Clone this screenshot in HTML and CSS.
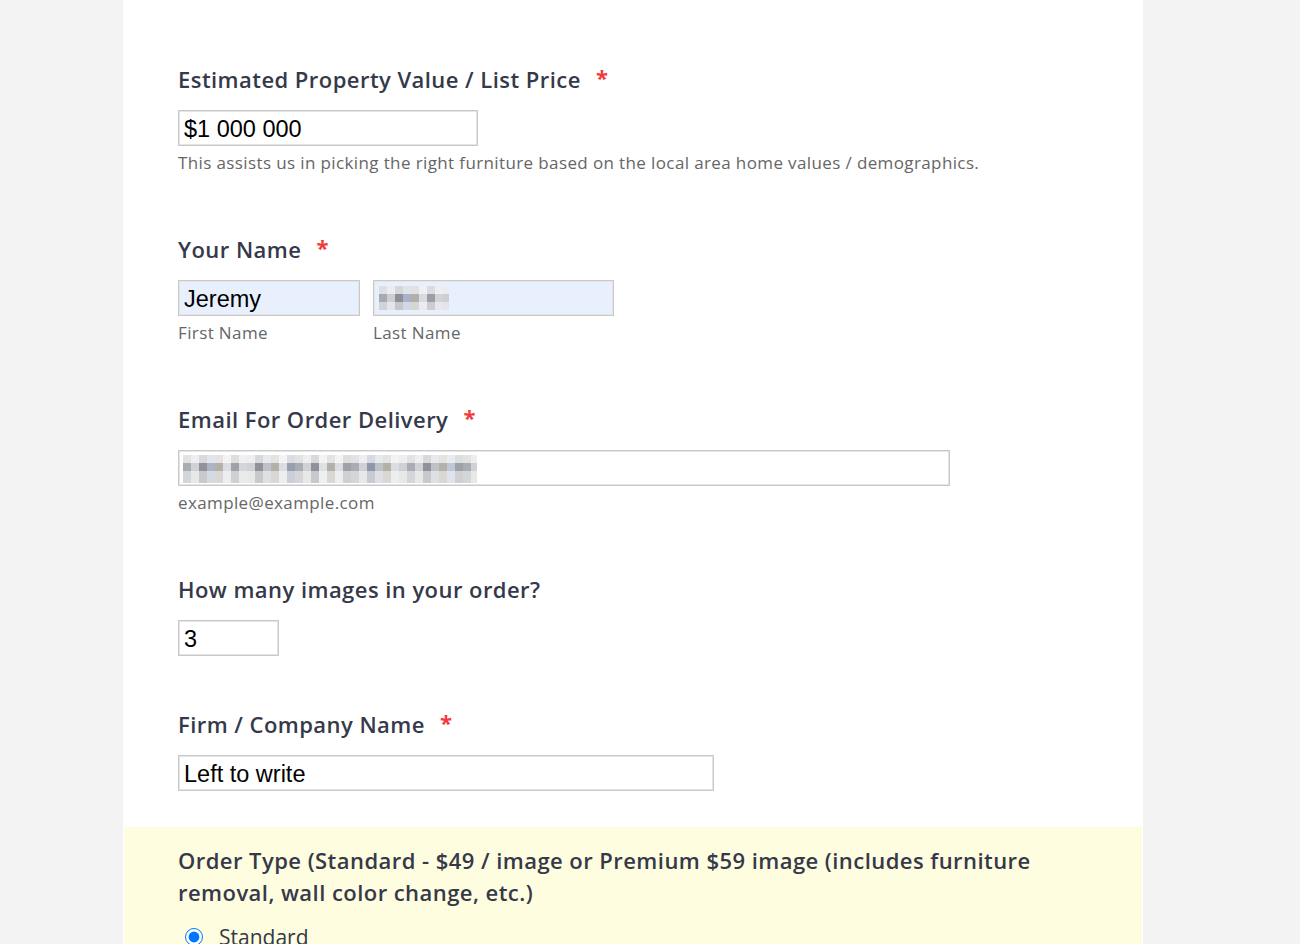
FILE: index.html
```html
<!DOCTYPE html>
<html lang="en">
<head>
  <meta charset="UTF-8" />
  <meta name="viewport" content="width=device-width, initial-scale=1.0" />
  <title>Virtual Staging Order Form</title>
  <link rel="stylesheet" href="styles.css">
</head>
<body>
  <!-- Order form card -->
  <form class="form-card">
    <div class="field">
      <label class="field-label" for="price">Estimated Property Value / List Price <span class="required">*</span></label>
      <input class="text-input price-input" id="price" type="text" value="$1 000 000" />
      <div class="sublabel">This assists us in picking the right furniture based on the local area home values / demographics.</div>
    </div>

    <div class="field">
      <label class="field-label">Your Name <span class="required">*</span></label>
      <div class="name-row">
        <div class="name-part">
          <input class="text-input autofill first-input" type="text" value="Jeremy" />
          <div class="sublabel">First Name</div>
        </div>
        <div class="name-part">
          <div class="text-input autofill last-input">
            <span class="mosaic mosaic-short"></span>
          </div>
          <div class="sublabel">Last Name</div>
        </div>
      </div>
    </div>

    <div class="field">
      <label class="field-label">Email For Order Delivery <span class="required">*</span></label>
      <div class="text-input email-input">
        <span class="mosaic mosaic-long"></span>
      </div>
      <div class="sublabel">example@example.com</div>
    </div>

    <div class="field field-count">
      <label class="field-label" for="count">How many images in your order?</label>
      <input class="text-input count-input" id="count" type="text" value="3" />
    </div>

    <div class="field field-tight">
      <label class="field-label" for="firm">Firm / Company Name <span class="required">*</span></label>
      <input class="text-input firm-input" id="firm" type="text" value="Left to write" />
    </div>

    <!-- Highlighted order type section -->
    <div class="field highlight">
      <div class="field-label wrap-label">Order Type (Standard - $49 / image or Premium $59 image (includes furniture removal, wall color change, etc.)</div>
      <label class="radio-row">
        <input type="radio" name="order-type" checked />
        <span>Standard</span>
      </label>
      <label class="radio-row">
        <input type="radio" name="order-type" />
        <span>Premium</span>
      </label>
    </div>
  </form>
</body>
</html>
```

FILE: styles.css
```css
/* Page background */
body {
  margin: 0;
  background-color: #f3f3f3;
  font-family: "Open Sans", "Noto Sans", sans-serif;
  height: 944px;
  overflow: hidden;
}
/* White form card */
.form-card {
  width: 1020px;
  margin-left: 123px;
  padding-top: 67px;
  background-color: #fff;
  min-height: 1100px;
}
/* Each question block */
.field {
  padding: 0 55px;
  margin-bottom: 64px;
}
.field-tight {
  margin-bottom: 36px;
}
.field-count {
  margin-bottom: 56px;
}
/* Question labels */
.field-label {
  display: block;
  font-size: 22px;
  font-weight: 600;
  letter-spacing: 0.45px;
  line-height: 24px;
  color: #35394a;
  margin-bottom: 19px;
}
.required {
  color: #f23a3c;
  font-weight: 700;
  margin-left: 9px;
  position: relative;
  top: -2px;
}
/* Text inputs */
.text-input {
  display: block;
  box-sizing: border-box;
  height: 36px;
  margin: 0;
  padding: 2px 5px 0;
  border: 1px solid #c9c9c9;
  box-shadow: inset 0 0 0 1px #e4e4e4;
  background-color: #fff;
  font-family: "Liberation Sans", Arial, sans-serif;
  font-size: 23.5px;
  letter-spacing: 0;
  color: #000;
  outline: none;
}
.autofill {
  background-color: #e8f0fe;
}
.price-input {
  width: 300px;
}
.first-input {
  width: 182px;
}
.last-input {
  width: 241px;
}
.email-input {
  width: 772px;
}
.count-input {
  width: 101px;
}
.firm-input {
  width: 536px;
}
/* Hints under inputs */
.sublabel {
  margin-top: 7px;
  font-size: 17px;
  letter-spacing: 0.38px;
  line-height: 20px;
  color: #666;
}
/* First / last name side by side */
.name-row {
  display: flex;
  gap: 13px;
}
/* Blurred (pixelated) personal data */
.mosaic {
  display: block;
  margin-top: 3px;
  height: 24px;
  opacity: 0.85;
  background-image:
    linear-gradient(to bottom, rgba(255,255,255,0.65) 0 8px, transparent 8px 16px, rgba(255,255,255,0.5) 16px),
    repeating-linear-gradient(to right, transparent 0 24px, rgba(120,140,190,0.35) 24px 32px, transparent 32px 56px, rgba(255,255,255,0.5) 56px 64px, transparent 64px 80px),
    repeating-linear-gradient(to right, #9a9ea6 0 8px, #c8c9cd 8px 16px, #7d8088 16px 24px, #b4b7bf 24px 32px, #a7a49a 32px 40px, #d7d8dc 40px 48px, #8e9196 48px 56px);
}
.mosaic-short {
  width: 70px;
}
.mosaic-long {
  width: 294px;
  margin-top: 2px;
  height: 28px;
  margin-left: -1px;
}
/* Yellow highlighted section */
.highlight {
  margin: 0 1px;
  padding: 17px 54px 30px;
  background-color: #fffddf;
}
.wrap-label {
  line-height: 32px;
  max-width: 880px;
  margin-bottom: 15px;
}
.radio-row {
  display: flex;
  align-items: center;
  gap: 16px;
  margin-left: 7px;
  margin-bottom: 12px;
  font-size: 21px;
  color: #35394a;
}
.radio-row input {
  width: 18px;
  height: 18px;
  margin: 0;
  accent-color: #0075ff;
}
```
